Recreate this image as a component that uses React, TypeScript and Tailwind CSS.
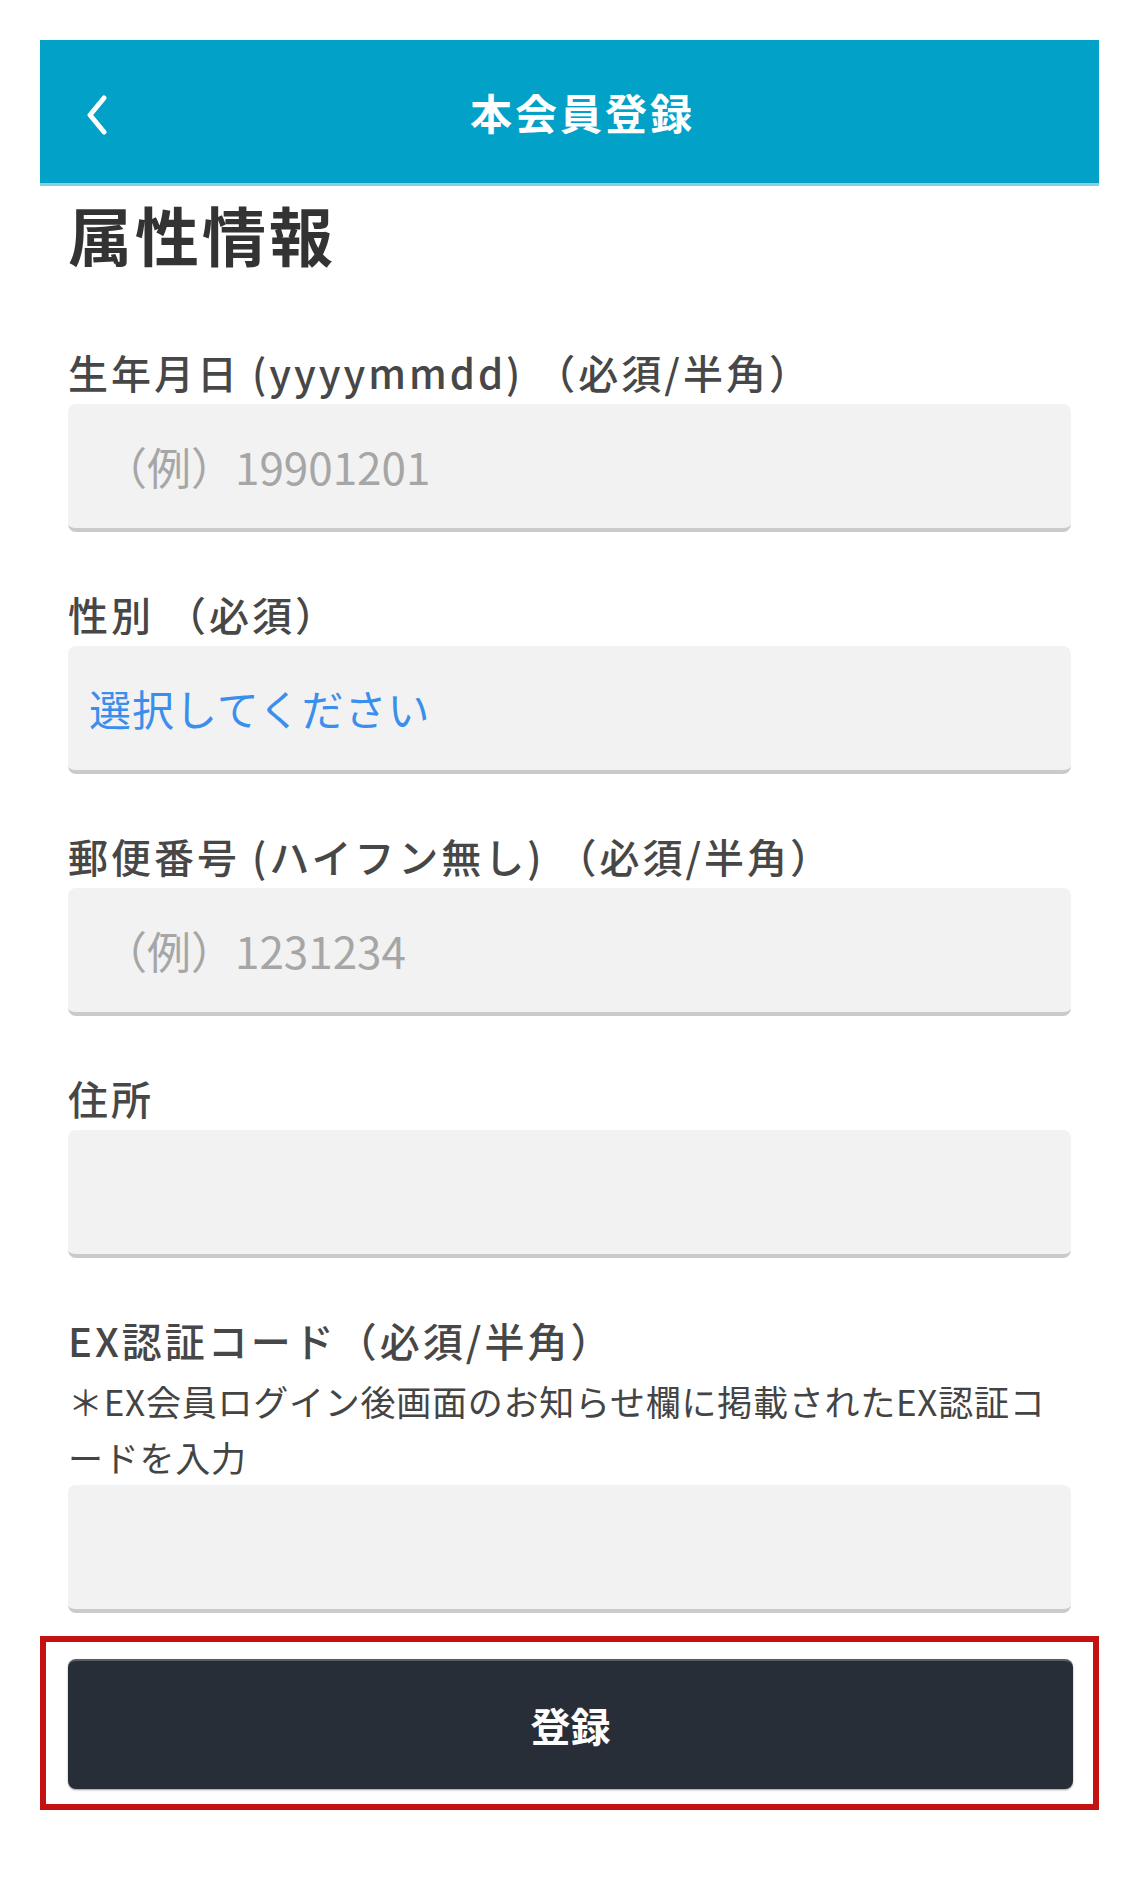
import React from "react";

const font = "font-['Noto_Sans_CJK_JP','Noto_Sans',sans-serif]";

function Label({ children }: { children: React.ReactNode }) {
  return (
    <div className="h-[52px] text-[40px] leading-[52px] font-medium tracking-[3px] text-[#474747] whitespace-nowrap">
      {children}
    </div>
  );
}

function Field({ children, className = "" }: { children?: React.ReactNode; className?: string }) {
  return (
    <div
      className={`h-[128px] rounded-[8px] bg-[#f2f2f2] border-b-4 border-[#cacaca] flex items-center ${className}`}
    >
      {children}
    </div>
  );
}

export default function App() {
  return (
    <div className={`min-h-[1884px] bg-white pt-[40px] ${font}`}>
      <div className="ml-[40px] w-[1059px]">
        <header className="relative h-[146px] bg-[#01a1c8] border-b-[3px] border-[#86d0e4] flex items-center justify-center">
          <svg
            className="absolute left-[44px] top-[55px]"
            width="26"
            height="40"
            viewBox="0 0 26 40"
            fill="none"
          >
            <path d="M20 3 L6 20 L20 37" stroke="white" strokeWidth="5" strokeLinecap="round" strokeLinejoin="round" />
          </svg>
          <h1 className="pl-[26px] text-[42px] leading-none font-bold tracking-[3px] text-white">本会員登録</h1>
        </header>

        <main className="px-[28px]">
          <h2 className="mt-[11px] h-[72px] text-[64px] leading-[72px] font-bold tracking-[3px] text-[#333333]">
            属性情報
          </h2>

          <section className="mt-[77px]">
            <Label>生年月日 (yyyymmdd) （必須/半角）</Label>
            <div className="mt-[6px]">
              <Field className="pl-[35px]">
                <span className="text-[44px] leading-none text-[#a6a6a6]">（例）19901201</span>
              </Field>
            </div>
          </section>

          <section className="mt-[56px]">
            <Label>性別 （必須）</Label>
            <div className="mt-[6px]">
              <Field className="pl-[21px]">
                <span className="text-[42px] leading-none tracking-[1px] text-[#3b8fec]">選択してください</span>
              </Field>
            </div>
          </section>

          <section className="mt-[56px]">
            <Label>郵便番号 (ハイフン無し) （必須/半角）</Label>
            <div className="mt-[6px]">
              <Field className="pl-[35px]">
                <span className="text-[44px] leading-none text-[#a6a6a6]">（例）1231234</span>
              </Field>
            </div>
          </section>

          <section className="mt-[56px]">
            <Label>住所</Label>
            <div className="mt-[6px]">
              <Field />
            </div>
          </section>

          <section className="mt-[56px]">
            <Label>EX認証コード（必須/半角）</Label>
            <p className="mt-[7px] text-[35px] leading-[56px] tracking-[0.75px] text-[#444444] whitespace-nowrap">
              ＊EX会員ログイン後画面のお知らせ欄に掲載されたEX認証コ
              <br />
              ードを入力
            </p>
            <Field />
          </section>
        </main>

        <div className="mt-[23px] border-[6px] border-[#c41111] pl-[22px] pr-[20px] pt-[17px] pb-[15px]">
          <button className="w-full h-[130px] rounded-[8px] bg-[#282e37] border-t-2 border-[#5a5e64] shadow-[0_1px_2px_rgba(0,0,0,0.4)] flex items-center justify-center">
            <span className="text-[40px] leading-none font-bold text-white">登録</span>
          </button>
        </div>
      </div>
    </div>
  );
}
